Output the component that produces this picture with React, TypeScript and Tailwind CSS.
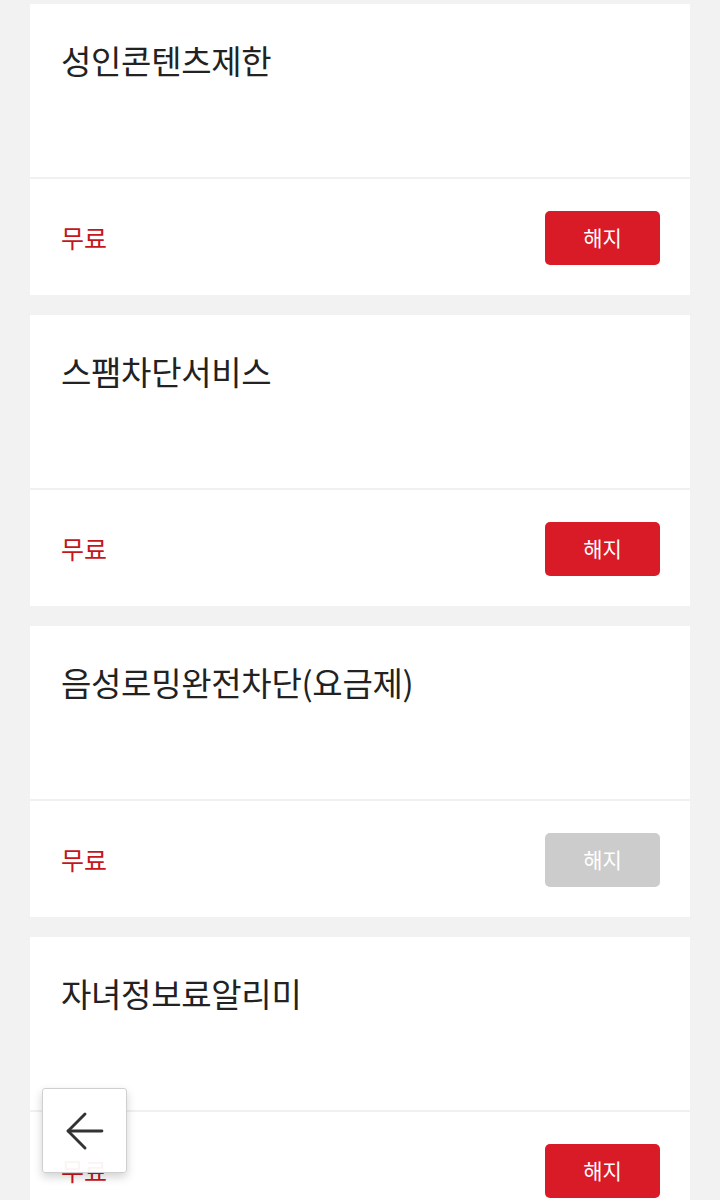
import { ArrowLeft } from 'lucide-react';

type Service = {
  name: string;
  price: string;
  disabled?: boolean;
};

const services: Service[] = [
  { name: '성인콘텐츠제한', price: '무료' },
  { name: '스팸차단서비스', price: '무료' },
  { name: '음성로밍완전차단(요금제)', price: '무료', disabled: true },
  { name: '자녀정보료알리미', price: '무료' },
];

function ServiceCard({ service }: { service: Service }) {
  return (
    <div className="bg-white">
      {/* Title */}
      <div className="h-[175px] pl-[31px] pt-[36px] border-b-2 border-[#f0f0f0]">
        <h2 className="text-[33px] leading-[40px] text-[#222222] tracking-[-0.3px]">{service.name}</h2>
      </div>

      {/* Price + action */}
      <div className="h-[116px] flex items-center justify-between pl-[31px] pr-[30px] pt-[1px]">
        <span className="text-[25px] text-[#c4161c]">{service.price}</span>
        <button
          className={
            service.disabled
              ? 'w-[115px] h-[54px] rounded-[5px] bg-[#cccccc] text-white text-[21px]'
              : 'w-[115px] h-[54px] rounded-[5px] bg-[#d91a27] text-white text-[21px]'
          }
        >
          해지
        </button>
      </div>
    </div>
  );
}

export default function App() {
  return (
    <div
      className="relative h-[1200px] overflow-hidden bg-[#f2f2f2]"
      style={{ fontFamily: '"Noto Sans CJK KR", "Noto Sans", sans-serif' }}
    >
      <div className="flex flex-col gap-[20px] px-[30px] pt-[4px]">
        {services.map((s) => (
          <ServiceCard key={s.name} service={s} />
        ))}
      </div>

      {/* Floating back button */}
      <button className="absolute left-[42px] top-[1088px] w-[85px] h-[85px] flex items-center justify-center bg-white/95 border border-[#cfcfcf] rounded-[3px] shadow-[0_4px_10px_rgba(0,0,0,0.18)]">
        <ArrowLeft className="w-[58px] h-[58px] text-[#333333]" strokeWidth={1.2} />
      </button>
    </div>
  );
}
